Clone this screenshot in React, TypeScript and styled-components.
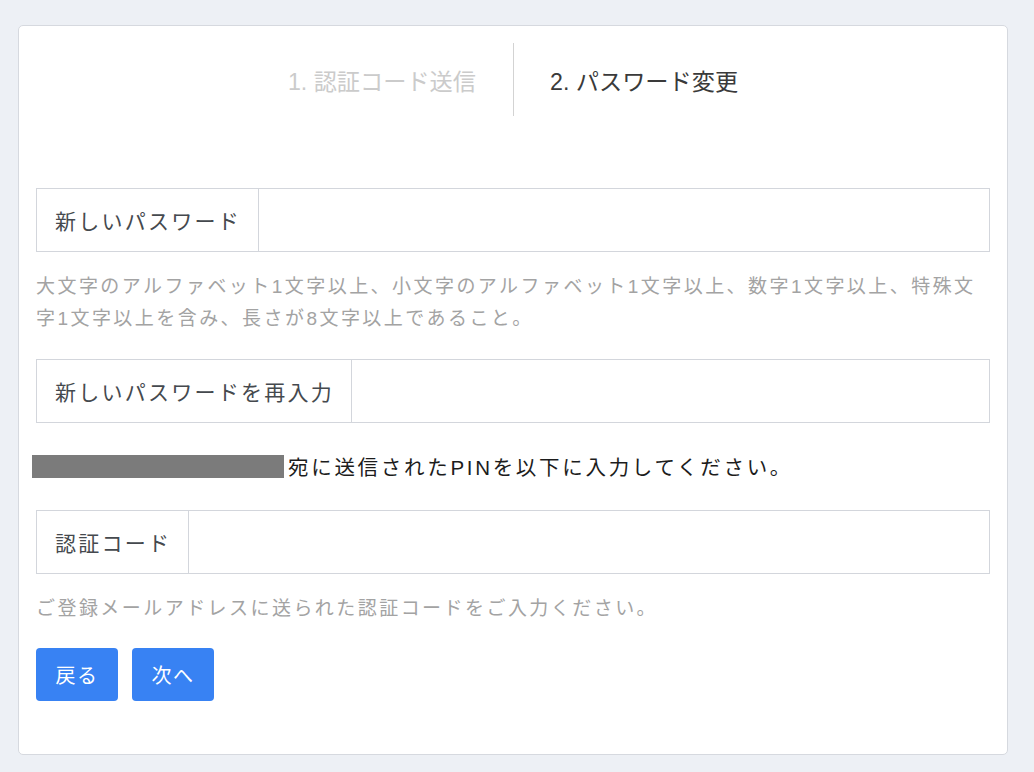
import React from "react";
import styled, { createGlobalStyle } from "styled-components";

const GlobalStyle = createGlobalStyle`
  html, body {
    margin: 0;
    padding: 0;
    background: #edf0f5;
  }
  body {
    font-family: "Liberation Sans", "Noto Sans CJK JP", sans-serif;
    color: #333;
  }
  * { box-sizing: border-box; }
`;

const Page = styled.div`
  padding: 25px 26px 17px 18px;
`;

const Card = styled.div`
  width: 990px;
  background: #ffffff;
  border: 1px solid #d6d9df;
  border-radius: 5px;
  padding: 17px 17px 53px 17px;
`;

const StepNav = styled.div`
  display: grid;
  grid-template-columns: 1fr 1fr;
  margin-bottom: 72px;
`;

const Step = styled.div<{ $active?: boolean; $side: "left" | "right" }>`
  height: 73px;
  display: flex;
  align-items: center;
  justify-content: ${(p) => (p.$side === "left" ? "flex-end" : "flex-start")};
  padding: ${(p) => (p.$side === "left" ? "0 37px 0 0" : "0 0 0 36px")};
  border-left: ${(p) => (p.$side === "right" ? "1px solid #d3d3d3" : "none")};
  font-size: 23.2px;
  letter-spacing: 0;
  color: ${(p) => (p.$active ? "#3a3a3a" : "#cbcbcb")};
`;

const InputGroup = styled.div`
  display: flex;
  height: 64px;
  border: 1px solid #d3d6dc;
  background: #fff;
`;

const InputLabel = styled.label`
  display: flex;
  align-items: center;
  padding: 0 17px 0 18px;
  border-right: 1px solid #d3d6dc;
  font-size: 21px;
  letter-spacing: 2.25px;
  color: #45494e;
  white-space: nowrap;
`;

const TextInput = styled.input`
  flex: 1;
  border: none;
  outline: none;
  background: transparent;
  font-size: 20px;
  padding: 0 16px;
`;

const HelpText = styled.p<{ $after?: number }>`
  margin: 19px 0 ${(p) => p.$after ?? 24}px 0;
  font-size: 19px;
  line-height: 32px;
  letter-spacing: 2.45px;
  color: #a3a3a3;
`;

const PinLine = styled.div`
  display: flex;
  align-items: center;
  height: 32px;
  margin: 27px 0 28px -4px;
  font-size: 20.5px;
  letter-spacing: 2.7px;
  color: #1c1c1c;
`;

const Masked = styled.span`
  display: inline-block;
  width: 252px;
  height: 23px;
  background: #7b7b7b;
  margin-right: 4px;
`;

const ButtonRow = styled.div`
  display: flex;
  gap: 14px;
`;

const Button = styled.button`
  width: 82px;
  height: 53px;
  border: none;
  border-radius: 4px;
  background: #3882f3;
  color: #ffffff;
  font-family: inherit;
  font-size: 20px;
  letter-spacing: 0.08em;
  cursor: pointer;
  padding: 0;
`;

export default function App() {
  return (
    <>
      <GlobalStyle />
      <Page>
        <Card>
          <StepNav>
            <Step $side="left">1. 認証コード送信</Step>
            <Step $side="right" $active>
              2. パスワード変更
            </Step>
          </StepNav>

          <InputGroup>
            <InputLabel>新しいパスワード</InputLabel>
            <TextInput type="password" />
          </InputGroup>
          <HelpText>
            大文字のアルファベット1文字以上、小文字のアルファベット1文字以上、数字1文字以上、特殊文字1文字以上を含み、長さが8文字以上であること。
          </HelpText>

          <InputGroup>
            <InputLabel>新しいパスワードを再入力</InputLabel>
            <TextInput type="password" />
          </InputGroup>

          <PinLine>
            <Masked />
            宛に送信されたPINを以下に入力してください。
          </PinLine>

          <InputGroup>
            <InputLabel>認証コード</InputLabel>
            <TextInput type="text" />
          </InputGroup>
          <HelpText $after={23}>ご登録メールアドレスに送られた認証コードをご入力ください。</HelpText>

          <ButtonRow>
            <Button>戻る</Button>
            <Button>次へ</Button>
          </ButtonRow>
        </Card>
      </Page>
    </>
  );
}
